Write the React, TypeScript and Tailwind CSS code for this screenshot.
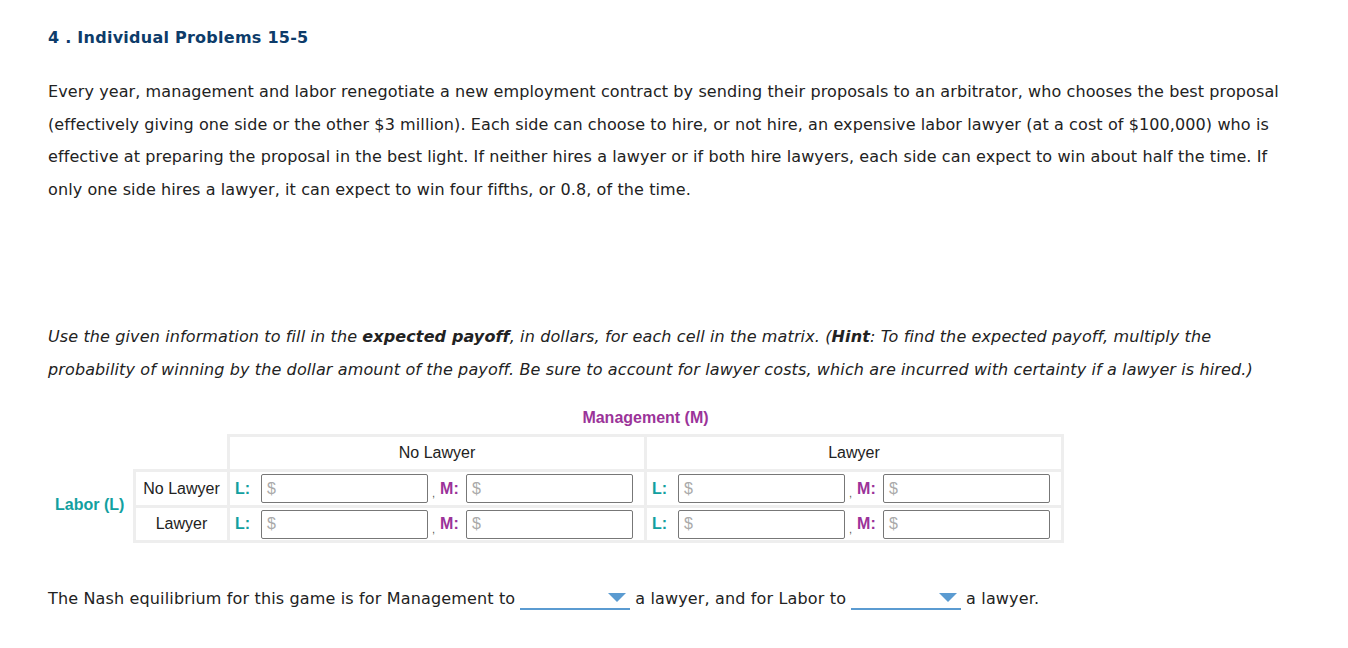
const verdana = { fontFamily: '"DejaVu Sans", Verdana, sans-serif' };

const PayoffInput = () => (
  <div className="flex h-[29px] w-[167px] shrink-0 items-center rounded-[2px] border border-[#777] bg-white pl-[5px] text-[16px] text-[#aaa]">
    $
  </div>
);

const PayoffCell = () => (
  <td className="w-[417px] border-[3px] border-[#eeeeee] pl-[5px] pr-0 py-[1px]">
    <div className="flex items-center">
      <span className="w-[26px] shrink-0 font-bold text-[#12a0a0]">L:</span>
      <PayoffInput />
      <span className="ml-[4px] mr-[5px] mt-[10px] text-[11px] text-[#555]">,</span>
      <span className="w-[26px] shrink-0 font-bold text-[#9b3399]">M:</span>
      <PayoffInput />
    </div>
  </td>
);

const Dropdown = () => (
  <span className="mx-[5px] inline-flex h-[22px] w-[110px] items-center justify-end border-b-2 border-[#5b9bd1] pr-[4px] align-middle">
    <svg width="18" height="10" viewBox="0 0 18 10">
      <polygon points="0,0 18,0 9,9" fill="#5b9bd1" />
    </svg>
  </span>
);

export default function App() {
  return (
    <div className="min-h-[648px] bg-white px-[48px] pt-[26px] text-[#222]">
      <h2 className="text-[16px] font-bold tracking-[0.25px] text-[#0d3c6a]" style={verdana}>
        4 . Individual Problems 15-5
      </h2>

      <p className="mt-[26px] whitespace-nowrap text-[16px] leading-[32.5px] tracking-[0.1px]" style={verdana}>
        Every year, management and labor renegotiate a new employment contract by sending their proposals to an
        arbitrator, who chooses the best proposal
        <br />
        (effectively giving one side or the other $3 million). Each side can choose to hire, or not hire, an expensive
        labor lawyer (at a cost of $100,000) who is
        <br />
        effective at preparing the proposal in the best light. If neither hires a lawyer or if both hire lawyers, each
        side can expect to win about half the time. If
        <br />
        only one side hires a lawyer, it can expect to win four fifths, or 0.8, of the time.
      </p>

      <p
        className="mt-[115px] whitespace-nowrap text-[16px] italic leading-[32.5px] tracking-[0.12px]"
        style={verdana}
      >
        Use the given information to fill in the <b>expected payoff</b>, in dollars, for each cell in the matrix. (
        <b>Hint</b>: To find the expected payoff, multiply the
        <br />
        probability of winning by the dollar amount of the payoff. Be sure to account for lawyer costs, which are
        incurred with certainty if a lawyer is hired.)
      </p>

      <div className="mt-[20px] flex" style={{ fontFamily: '"Liberation Sans", Arial, sans-serif' }}>
        <div className="flex w-[85px] items-end pb-[26px] pl-[7px] text-[16px] font-bold text-[#12a0a0]">
          Labor (L)
        </div>
        <div className="flex flex-col">
          <div className="ml-[94px] flex h-[28px] items-start justify-center text-[16px] font-bold text-[#9b3399]">
            Management (M)
          </div>
          <table className="border-collapse text-[16px] text-[#222]">
            <tbody>
              <tr className="h-[35px]">
                <td className="w-[94px]" />
                <td className="border-[3px] border-[#eeeeee] text-center">No Lawyer</td>
                <td className="border-[3px] border-[#eeeeee] text-center">Lawyer</td>
              </tr>
              <tr className="h-[36px]">
                <td className="w-[94px] border-[3px] border-[#eeeeee] px-[4px] text-center">No Lawyer</td>
                <PayoffCell />
                <PayoffCell />
              </tr>
              <tr className="h-[35px]">
                <td className="w-[94px] border-[3px] border-[#eeeeee] px-[4px] text-center">Lawyer</td>
                <PayoffCell />
                <PayoffCell />
              </tr>
            </tbody>
          </table>
        </div>
      </div>

      <p className="mt-[44px] flex items-center text-[16px] tracking-[0.15px] text-[#222]" style={verdana}>
        The Nash equilibrium for this game is for Management to
        <Dropdown />a lawyer, and for Labor to
        <Dropdown />a lawyer.
      </p>
    </div>
  );
}
